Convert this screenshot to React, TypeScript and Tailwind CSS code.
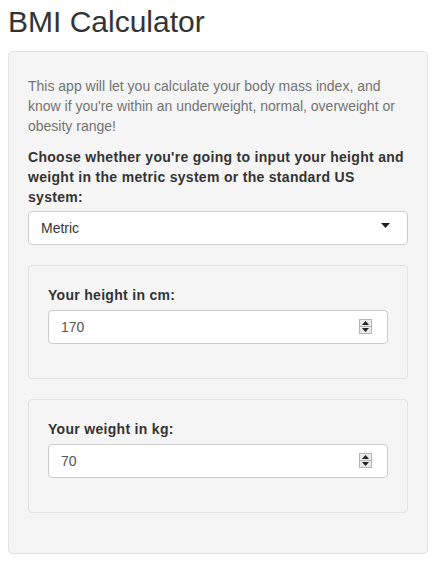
import React from "react";

function Spinner() {
  return (
    <div className="absolute right-[15px] top-[8px] flex h-[15px] w-[13px] flex-col border border-[#b5b5b5] bg-[#e9e9e9]">
      <div className="flex flex-1 items-center justify-center border-b border-[#b5b5b5]">
        <svg width="7" height="4" viewBox="0 0 7 4"><polygon points="0,4 7,4 3.5,0" fill="#222" /></svg>
      </div>
      <div className="flex flex-1 items-center justify-center">
        <svg width="7" height="4" viewBox="0 0 7 4"><polygon points="0,0 7,0 3.5,4" fill="#222" /></svg>
      </div>
    </div>
  );
}

function NumberWell({ label, value }: { label: string; value: string }) {
  return (
    <div className="rounded-[4px] border border-[#e3e3e3] bg-[#f5f5f5] px-[19px] pt-[19px] pb-[34px]">
      <div className="mb-[5px] text-[14px] leading-[20px] font-bold tracking-[0.3px] text-[#333]">{label}</div>
      <div className="relative h-[34px] rounded-[4px] border border-[#ccc] bg-white pl-[12px] text-[14px] leading-[32px] text-[#555]">
        {value}
        <Spinner />
      </div>
    </div>
  );
}

export default function App() {
  return (
    <div className="min-h-[563px] bg-white px-[8px] pt-[5px] text-[#333]" style={{ fontFamily: '"Liberation Sans", Arial, sans-serif' }}>
      <h2 className="text-[30px] leading-[33px] font-medium text-[#333]">BMI Calculator</h2>
      <div className="mt-[13px] w-[420px] rounded-[4px] border border-[#e3e3e3] bg-[#f5f5f5] px-[19px] pt-[24px] pb-[40px]">
        <p className="text-[14px] leading-[20px] text-[#737373]">
          This app will let you calculate your body mass index, and know if you're within an underweight, normal, overweight or obesity range!
        </p>
        <div className="mt-[11px] mb-[4px] text-[14px] leading-[20px] font-bold tracking-[0.3px] text-[#333]">
          Choose whether you're going to input your height and weight in the metric system or the standard US system:
        </div>
        <div className="relative h-[34px] rounded-[4px] border border-[#ccc] bg-white pl-[12px] text-[14px] leading-[32px] text-[#333]">
          Metric
          <svg className="absolute right-[17px] top-[11px]" width="9" height="5" viewBox="0 0 9 5">
            <polygon points="0,0 9,0 4.5,5" fill="#222" />
          </svg>
        </div>
        <div className="mt-[20px] flex flex-col gap-[20px]">
          <NumberWell label="Your height in cm:" value="170" />
          <NumberWell label="Your weight in kg:" value="70" />
        </div>
      </div>
    </div>
  );
}
